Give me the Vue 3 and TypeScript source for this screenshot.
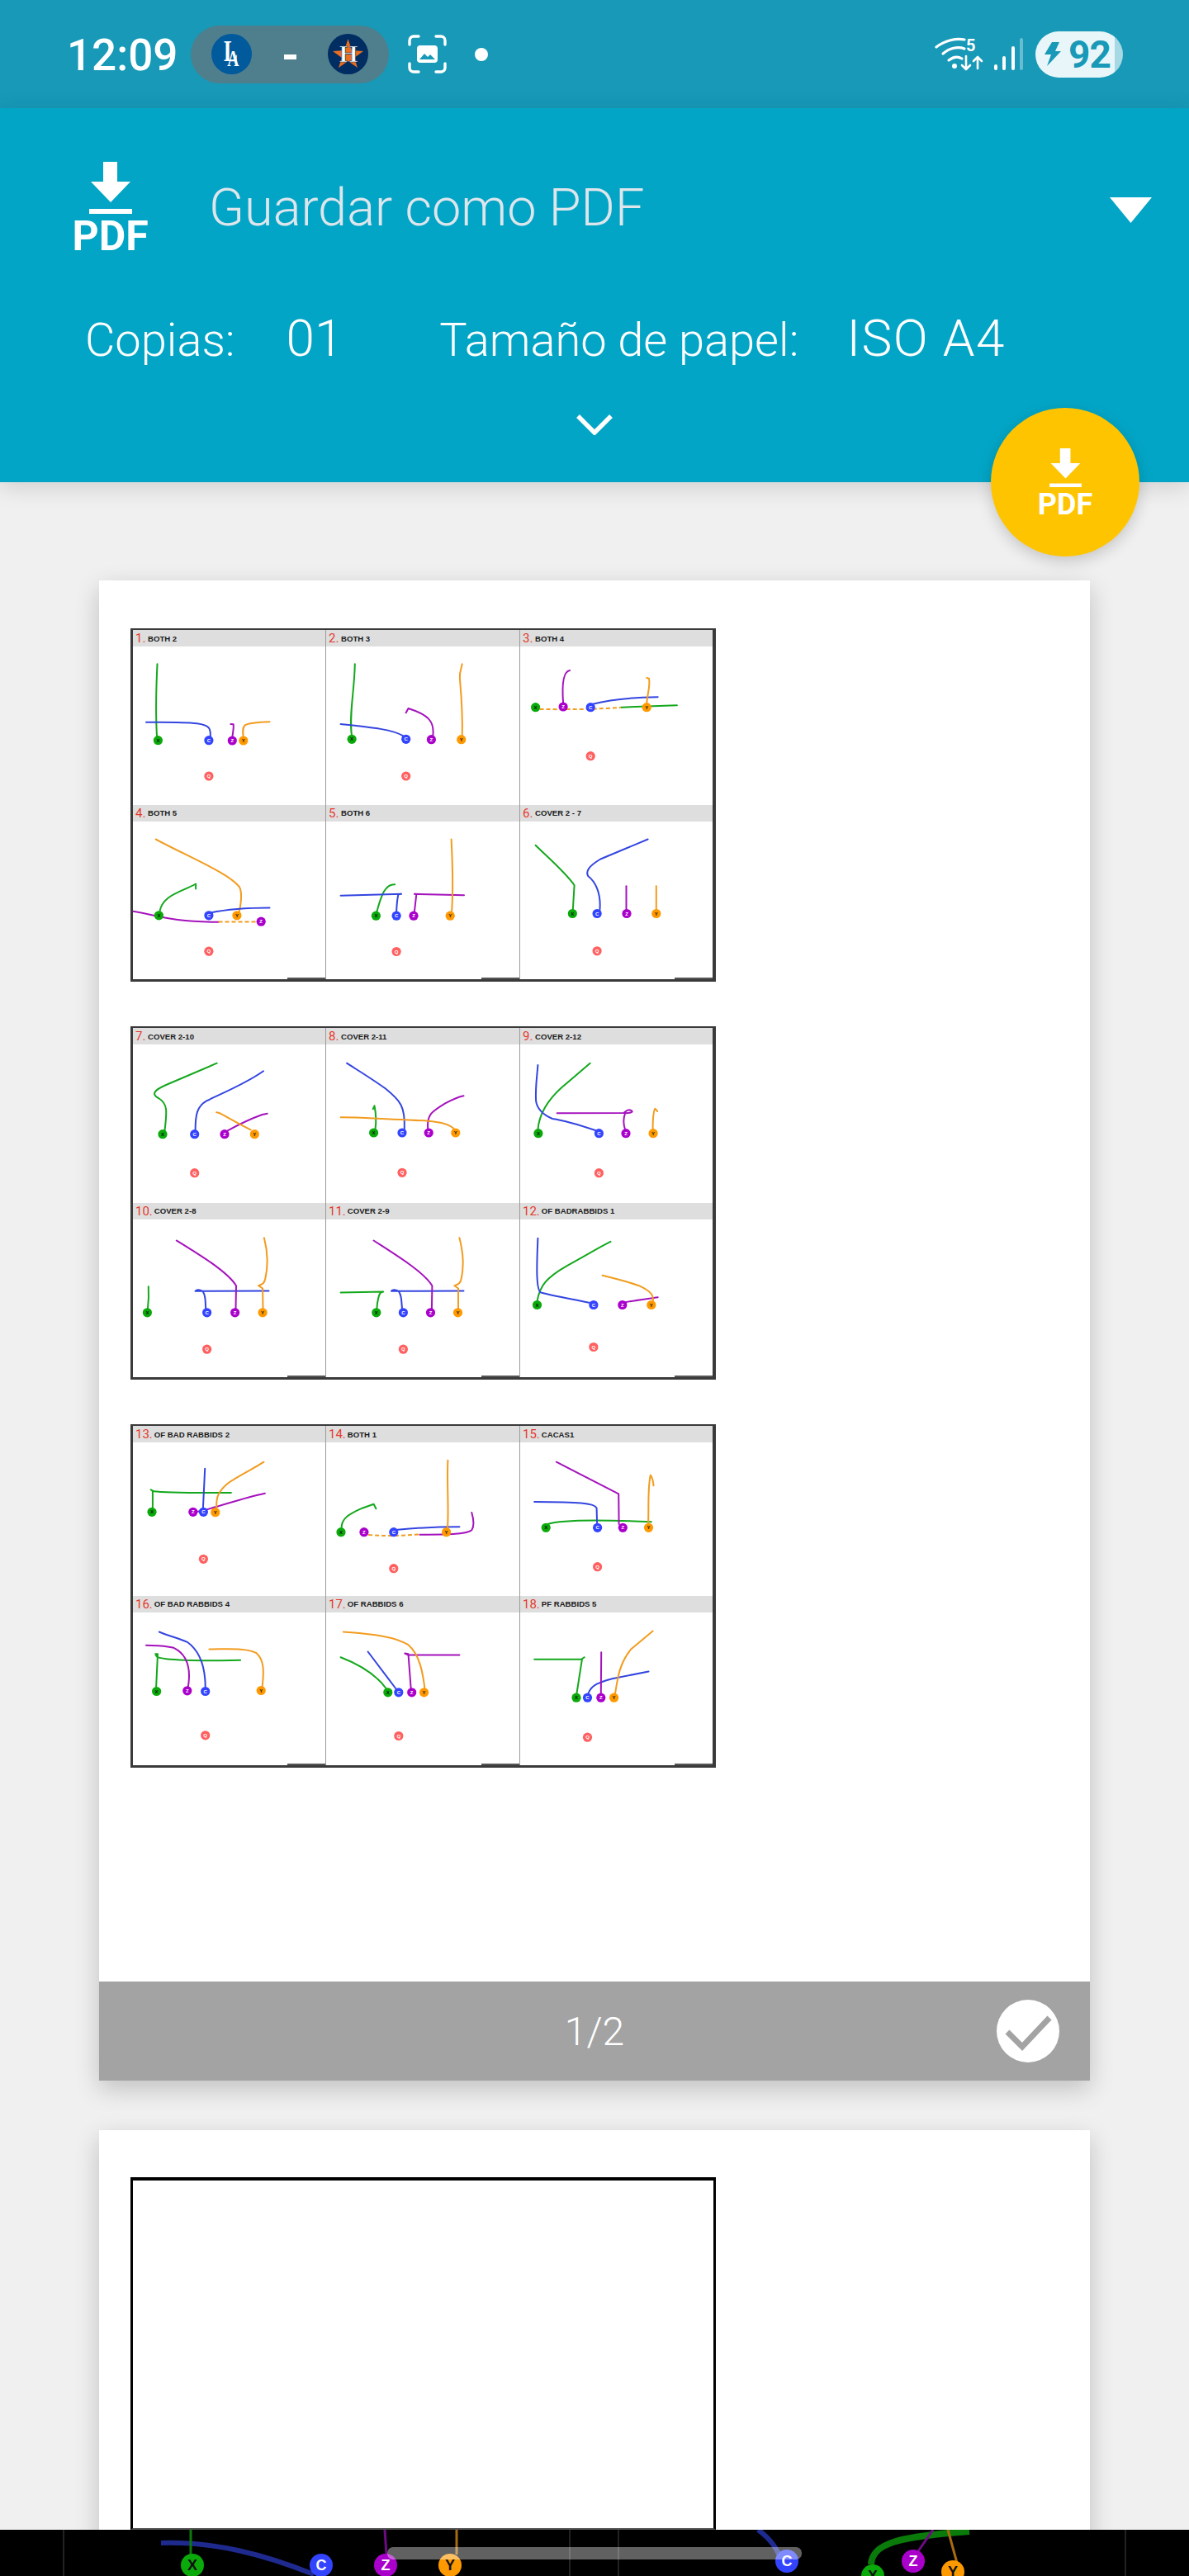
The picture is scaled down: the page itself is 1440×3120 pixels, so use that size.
<script setup lang="ts">
type Player = [string, number, number]
type Route = [string, string]
interface Play { title: string; players: Player[]; routes: Route[] }
interface Sheet { top: number; zoomY: number; height: number; plays: Play[] }

// coordinates were read off 3x crops: x is scaled by 2.148 and y by 3
const XS = 2.148
const COL_LEFT = [23.6, 526.3, 1031]

const raw: Sheet[] = [
  {
    top: 761, zoomY: 750, height: 428,
    plays: [
      { title: 'BOTH 2',
        players: [['X', 89, 440], ['C', 221, 440], ['Z', 282, 441], ['Y', 311, 441], ['Q', 221, 570]],
        routes: [
          ['green', 'M86 430C82 340 84 250 87 163'],
          ['blue', 'M225 428C226 400 225 385 190 379C150 373 100 375 58 374'],
          ['purple', 'M282 430C284 410 286 395 285 382L278 381'],
          ['orange', 'M311 430C309 410 308 395 315 385C325 376 355 374 379 373'],
        ] },
      { title: 'BOTH 3',
        players: [['X', 593, 436], ['C', 734, 436], ['Z', 800, 437], ['Y', 878, 437], ['Q', 734, 570]],
        routes: [
          ['green', 'M593 425C585 350 600 260 601 163'],
          ['blue', 'M728 425C700 400 640 392 564 381'],
          ['purple', 'M804 425C808 380 800 350 740 324L734 340'],
          ['orange', 'M880 425C882 340 878 280 874 215C873 190 878 180 880 163'],
        ] },
      { title: 'BOTH 4',
        players: [['X', 1071, 320], ['Z', 1143, 318], ['C', 1214, 320], ['Y', 1360, 320], ['Q', 1214, 497]],
        routes: [
          ['dash', 'M1082 327C1150 328 1230 328 1295 320'],
          ['green', 'M1295 320L1439 313'],
          ['blue', 'M1220 308C1270 290 1320 284 1389 283'],
          ['purple', 'M1143 305C1140 250 1140 190 1160 186'],
          ['orange', 'M1360 308C1362 270 1370 240 1366 215L1360 213'],
        ] },
      { title: 'BOTH 5',
        players: [['X', 91, 1075], ['C', 221, 1075], ['Y', 294, 1075], ['Z', 357, 1097], ['Q', 221, 1205]],
        routes: [
          ['orange', 'M300 1062C305 1030 308 990 300 970C270 920 180 870 83 798'],
          ['green', 'M93 1062C100 1000 150 990 187 960L187 978'],
          ['blue', 'M225 1065C270 1052 320 1047 379 1047'],
          ['purple', 'M23 1060C90 1075 120 1098 246 1099'],
          ['dash', 'M246 1098L345 1098'],
        ] },
      { title: 'BOTH 6',
        players: [['X', 656, 1076], ['C', 709, 1076], ['Z', 754, 1076], ['Y', 849, 1076], ['Q', 709, 1206]],
        routes: [
          ['green', 'M658 1062C670 1000 680 960 705 962'],
          ['blue', 'M709 1062C710 1030 712 1010 714 998L722 997L564 1003'],
          ['purple', 'M756 1062L761 998L756 997L885 1001'],
          ['orange', 'M853 1062C858 960 855 880 852 798'],
        ] },
      { title: 'COVER 2 - 7',
        players: [['X', 1167, 1068], ['C', 1231, 1068], ['Z', 1308, 1068], ['Y', 1385, 1068], ['Q', 1231, 1204]],
        routes: [
          ['green', 'M1168 1055L1172 965C1150 920 1100 860 1071 820'],
          ['blue', 'M1238 1055C1242 990 1225 950 1208 932C1200 915 1210 895 1240 870L1363 798'],
          ['purple', 'M1307 1055L1307 968'],
          ['orange', 'M1385 1055L1385 968'],
        ] },
    ],
  },
  {
    top: 1243, zoomY: 1240, height: 428,
    plays: [
      { title: 'COVER 2-10',
        players: [['X', 101, 401], ['C', 184, 401], ['Z', 262, 401], ['Y', 340, 401], ['Q', 184, 542]],
        routes: [
          ['green', 'M106 390C112 320 115 290 90 270C70 255 80 240 110 222L242 143'],
          ['blue', 'M186 388C186 330 190 300 215 280C260 250 320 215 363 172'],
          ['purple', 'M270 388C300 365 340 340 360 330L373 326'],
          ['orange', 'M330 385C300 365 270 340 250 325L241 322'],
        ] },
      { title: 'COVER 2-11',
        players: [['X', 650, 396], ['C', 724, 396], ['Z', 793, 396], ['Y', 863, 396], ['Q', 724, 541]],
        routes: [
          ['green', 'M654 382C658 350 655 320 652 298L648 310'],
          ['blue', 'M730 382C732 300 720 280 680 235C640 195 610 170 580 143'],
          ['purple', 'M791 382C788 330 800 320 835 290C855 275 870 265 884 262'],
          ['orange', 'M858 380C840 355 800 352 700 347C650 344 610 340 564 340'],
        ] },
      { title: 'COVER 2-12',
        players: [['X', 1078, 398], ['C', 1236, 398], ['Z', 1306, 398], ['Y', 1377, 398], ['Q', 1236, 542]],
        routes: [
          ['green', 'M1077 385C1080 330 1100 280 1140 230C1170 195 1190 170 1213 143'],
          ['blue', 'M1228 388C1190 370 1140 350 1115 345C1090 330 1075 310 1072 280C1070 230 1075 190 1077 150'],
          ['purple', 'M1304 385C1298 360 1300 340 1304 325C1320 325 1330 318 1315 313C1305 314 1305 322 1300 324L1127 325'],
          ['orange', 'M1376 385C1376 350 1376 320 1382 308L1388 318'],
        ] },
      { title: 'COVER 2-8',
        players: [['X', 61, 1048], ['C', 216, 1048], ['Z', 289, 1048], ['Y', 361, 1048], ['Q', 216, 1181]],
        routes: [
          ['green', 'M62 1035C65 1000 65 980 64 953'],
          ['blue', 'M213 1035C212 1000 212 985 205 970C195 962 188 965 186 970L377 969'],
          ['purple', 'M291 1035L292 950C270 900 200 840 137 786'],
          ['orange', 'M362 1035L361 960L350 950C358 945 365 945 368 925C375 880 375 830 365 776'],
        ] },
      { title: 'COVER 2-9',
        players: [['X', 657, 1048], ['C', 727, 1048], ['Z', 798, 1048], ['Y', 869, 1048], ['Q', 727, 1181]],
        routes: [
          ['green', 'M658 1035C660 1000 662 985 668 975L675 972L564 975'],
          ['blue', 'M724 1035C722 1000 722 985 715 970C705 962 697 965 696 970L884 969'],
          ['purple', 'M801 1035L802 950C780 900 710 840 650 786'],
          ['orange', 'M870 1035L870 960L860 950C868 945 875 945 878 925C885 880 883 830 873 776'],
        ] },
      { title: 'OF BADRABBIDS 1',
        players: [['X', 1075, 1020], ['C', 1222, 1020], ['Z', 1297, 1020], ['Y', 1372, 1020], ['Q', 1222, 1173]],
        routes: [
          ['green', 'M1075 1007C1082 950 1100 920 1150 880C1190 850 1230 815 1266 790'],
          ['blue', 'M1210 1012C1170 1000 1120 988 1085 975C1070 965 1075 850 1077 778'],
          ['purple', 'M1305 1010C1330 1003 1360 998 1389 992'],
          ['orange', 'M1376 1007C1380 985 1370 970 1340 950C1310 935 1280 925 1245 913'],
        ] },
    ],
  },
  {
    top: 1725, zoomY: 1720, height: 416,
    plays: [
      { title: 'OF BAD RABBIDS 2',
        players: [['X', 73, 334], ['Z', 180, 334], ['C', 207, 334], ['Y', 238, 335], ['Q', 207, 505]],
        routes: [
          ['green', 'M75 320L75 256L70 253L75 258C110 265 200 265 279 264'],
          ['blue', 'M206 320L211 176'],
          ['purple', 'M190 333C240 320 300 285 367 266'],
          ['orange', 'M241 320C240 280 245 260 270 230C300 200 340 175 364 152'],
        ] },
      { title: 'BOTH 1',
        players: [['X', 565, 407], ['Z', 625, 407], ['C', 702, 407], ['Y', 839, 407], ['Q', 702, 539]],
        routes: [
          ['green', 'M566 394C566 360 580 345 620 320L650 305L656 322'],
          ['dash', 'M636 417C680 422 720 420 770 415'],
          ['purple', 'M770 416C820 416 890 418 905 400C912 385 910 360 905 336'],
          ['blue', 'M712 398C760 392 820 388 873 388'],
          ['orange', 'M842 394C846 320 840 230 843 146'],
        ] },
      { title: 'CACAS1',
        players: [['X', 1098, 391], ['C', 1232, 391], ['Z', 1298, 391], ['Y', 1365, 391], ['Q', 1232, 533]],
        routes: [
          ['green', 'M1102 378C1140 360 1250 362 1372 370'],
          ['blue', 'M1231 378L1230 320C1225 300 1180 298 1068 297'],
          ['purple', 'M1288 378L1287 268L1125 152'],
          ['orange', 'M1364 378C1366 320 1362 250 1370 200C1376 210 1377 225 1378 238'],
        ] },
      { title: 'OF BAD RABBIDS 4',
        players: [['X', 85, 984], ['Z', 165, 982], ['C', 212, 984], ['Y', 357, 981], ['Q', 212, 1144]],
        routes: [
          ['green', 'M84 970L88 848L82 848C85 860 85 862 110 866C170 875 240 872 303 871'],
          ['blue', 'M212 970C212 900 200 840 165 805C140 790 115 782 92 768'],
          ['purple', 'M167 968C175 900 165 850 130 826C100 816 80 818 58 817'],
          ['orange', 'M360 968C365 910 365 870 345 845C320 825 270 831 222 831'],
        ] },
      { title: 'OF RABBIDS 6',
        players: [['X', 687, 988], ['C', 715, 988], ['Z', 749, 988], ['Y', 781, 988], ['Q', 715, 1146]],
        routes: [
          ['green', 'M683 975C660 930 620 890 564 860'],
          ['blue', 'M708 975L635 840'],
          ['purple', 'M747 975L740 848L731 846L740 852L873 852'],
          ['orange', 'M783 975C778 920 770 850 740 815C700 780 630 775 571 768'],
        ] },
      { title: 'PF RABBIDS 5',
        players: [['X', 1177, 1007], ['C', 1206, 1007], ['Z', 1241, 1007], ['Y', 1275, 1007], ['Q', 1206, 1151]],
        routes: [
          ['green', 'M1178 993L1192 866L1198 860L1190 868L1068 868'],
          ['blue', 'M1208 993C1215 960 1240 950 1270 938L1365 912'],
          ['purple', 'M1241 993L1242 842'],
          ['orange', 'M1278 993C1285 930 1290 880 1320 830L1376 765'],
        ] },
    ],
  },
]

function mapPath(d: string, ox: number, oy: number) {
  let i = 0
  return d.replace(/\d+(\.\d+)?/g, (n) => {
    const v = i++ % 2 === 0 ? (+n - ox) / XS : (+n - oy) / 3
    return v.toFixed(1)
  })
}

let count = 0
const sheets = raw.map((s) => {
  const cellH = (s.height - 5) / 2
  return {
    height: s.height,
    plays: s.plays.map((p, i) => {
      const ox = COL_LEFT[i % 3]
      const bodyTop = s.top + 2 + 20 + (i > 2 ? cellH : 0)
      const oy = (bodyTop - s.zoomY) * 3
      count++
      return {
        num: count,
        title: p.title,
        players: p.players.map(([name, x, y]) => ({
          name,
          x: +((x - ox) / XS).toFixed(1),
          y: +((y - oy) / 3).toFixed(1),
        })),
        routes: p.routes.map(([kind, d]) => ({ kind, d: mapPath(d, ox, oy) })),
      }
    }),
  }
})

const stripRoutes = [
  { cls: 'dim-blue wide', d: 'M195 16C260 14 320 30 380 54' },
  { cls: 'dim-green', d: 'M231 0V30' },
  { cls: 'dim-purple', d: 'M466 0L468 30' },
  { cls: 'dim-orange', d: 'M553 0V30' },
  { cls: 'dim-blue wide', d: 'M918 0C932 10 942 22 947 40' },
  { cls: 'dim-green thick', d: 'M1055 42C1056 16 1090 8 1174 2' },
  { cls: 'dim-purple', d: 'M1130 0L1112 26' },
  { cls: 'dim-orange', d: 'M1148 0L1159 40' },
]
const stripNodes = [
  { name: 'X', cls: 'p-x', x: 233, y: 43 },
  { name: 'C', cls: 'p-c', x: 389, y: 43 },
  { name: 'Z', cls: 'p-z', x: 467, y: 43 },
  { name: 'Y', cls: 'p-y', x: 545, y: 43 },
  { name: 'C', cls: 'p-c', x: 953, y: 38 },
  { name: 'X', cls: 'p-x', x: 1057, y: 56 },
  { name: 'Z', cls: 'p-z', x: 1106, y: 38 },
  { name: 'Y', cls: 'p-y', x: 1154, y: 51 },
]
</script>

<template>
  <div class="screen">
    <div class="status">
      <span class="time">12:09</span>
      <div class="score">
        <svg class="team" viewBox="0 0 49 49">
          <circle cx="24.5" cy="24.5" r="24.5" fill="#005a9c" />
          <text class="la" transform="translate(15 33) scale(0.7 1)">L<tspan class="la-a" dx="-18" dy="6">A</tspan></text>
        </svg>
        <span class="dash"></span>
        <svg class="team" viewBox="0 0 49 49">
          <circle cx="24.5" cy="24.5" r="24.5" fill="#002d62" />
          <polygon fill="#eb6e1f" points="24.5,6 29,20 43,21 32,29 36,41 24.5,33 13,41 17,29 6,21 20,20" />
          <text class="hou" x="25" y="34">H</text>
        </svg>
      </div>
      <svg class="shot" viewBox="0 0 47 47">
        <path d="M2 12V7a5 5 0 0 1 5-5h6M34 2h6a5 5 0 0 1 5 5v5M45 35v5a5 5 0 0 1-5 5h-6M13 45H7a5 5 0 0 1-5-5v-5" fill="none" stroke="#fff" stroke-width="3.4" stroke-linecap="round" />
        <rect x="11" y="13" width="25" height="21" rx="4" fill="#fff" />
        <path d="M14 30l6-7 4 4 3-3 6 6z" fill="#1799b7" />
      </svg>
      <span class="dot"></span>

      <div class="sys">
        <svg class="wifi" viewBox="0 0 62 44">
          <g fill="none" stroke="#fff" stroke-width="3.2" stroke-linecap="round">
            <path d="M2 13C12 5 26 2 36 4" />
            <path d="M10 21C18 14 28 12 36 15" />
            <path d="M17 29C22 25 28 24 33 27" />
          </g>
          <circle cx="24" cy="36" r="3" fill="#fff" />
          <text class="five" x="38" y="18">5</text>
          <g fill="none" stroke="#fff" stroke-width="2.6" stroke-linecap="round" stroke-linejoin="round">
            <path d="M38 24V40M33 35l5 5 5-5" />
            <path d="M52 39V25M47 30l5-5 5 5" />
          </g>
        </svg>
        <div class="bars">
          <i class="b1"></i><i class="b2"></i><i class="b3"></i><i class="b4"></i>
        </div>
        <div class="battery">
          <svg class="bolt" viewBox="0 0 20 29">
            <path d="M9 0h9l-5 11h7L3 29l5-14H0z" fill="#1799b7" />
          </svg>
          <span>92</span>
        </div>
      </div>
    </div>

    <header class="bar">
      <div class="row-dest">
        <div class="pdf-icon">
          <svg class="pdf-arrow" viewBox="0 0 52 63">
            <path d="M17 0h17v24h16L26 49 2 24h15z" fill="#fff" />
            <rect y="57" width="52" height="6" fill="#fff" />
          </svg>
          <span>PDF</span>
        </div>
        <span class="dest">Guardar como PDF</span>
        <svg class="caret" viewBox="0 0 51 31"><polygon points="0,0 51,0 25.5,31" fill="#fff" /></svg>
      </div>
      <div class="row-opts">
        <span class="copies-label">Copias:</span>
        <span class="copies">01</span>
        <span class="paper-label">Tamaño de papel:</span>
        <span class="paper">ISO A4</span>
      </div>
      <svg class="chevron" viewBox="0 0 44 26">
        <path d="M2 3l20 20L42 3" fill="none" stroke="#fff" stroke-width="5.5" />
      </svg>
    </header>

    <div class="fab">
      <svg class="fab-arrow" viewBox="0 0 52 63">
        <path d="M17 0h17v24h16L26 49 2 24h15z" fill="#fff" />
        <rect y="57" width="52" height="6" fill="#fff" />
      </svg>
      <span>PDF</span>
    </div>

    <main class="pages">
      <section class="page">
        <div class="preview">
          <div v-for="(sheet, si) in sheets" :key="si" class="sheet" :style="{ height: sheet.height + 'px' }">
            <div v-for="play in sheet.plays" :key="play.num" class="cell">
              <div class="cell-head">
                <span class="num">{{ play.num }}.</span>
                <span class="name">{{ play.title }}</span>
              </div>
              <svg class="field">
                <path v-for="(r, ri) in play.routes" :key="ri" :d="r.d" :class="['route', r.kind]" />
                <g v-for="pl in play.players" :key="pl.name">
                  <circle :cx="pl.x" :cy="pl.y" r="5.6" :class="'p-' + pl.name.toLowerCase()" />
                  <text :x="pl.x" :y="pl.y + 2" :class="['tag', 't-' + pl.name.toLowerCase()]">{{ pl.name }}</text>
                </g>
              </svg>
            </div>
          </div>
        </div>
        <div class="page-foot">
          <span class="page-num">1/2</span>
          <svg class="check" viewBox="0 0 76 76">
            <circle cx="38" cy="38" r="38" fill="#fff" />
            <path d="M13 39l18 18 33-35" fill="none" stroke="#a3a3a3" stroke-width="7" />
          </svg>
        </div>
      </section>

      <section class="page second">
        <div class="blank-sheet"></div>
      </section>
    </main>

    <div class="strip">
      <svg class="strip-art" viewBox="0 0 1440 56">
        <path d="M77 0V56M690 0V56M749 0V56M1363 0V56" stroke="#222" stroke-width="2" fill="none" />
        <path v-for="(r, i) in stripRoutes" :key="i" :d="r.d" :class="['strip-route', r.cls]" />
        <g v-for="(n, i) in stripNodes" :key="i">
          <circle :cx="n.x" :cy="n.y" r="14" :class="n.cls" />
          <text :x="n.x" :y="n.y + 6" :class="['strip-tag', 't-' + n.name.toLowerCase()]">{{ n.name }}</text>
        </g>
      </svg>
      <div class="scrollbar"></div>
    </div>
  </div>
</template>

<style>
html, body { margin: 0; background: #f0f0f0; }
</style>

<style scoped>
.screen {
  position: relative; width: 1440px; height: 3120px; overflow: hidden;
  background: #f0f0f0; font-family: Roboto, "Liberation Sans", sans-serif;
  display: flex; flex-direction: column;
}

/* status bar */
.status {
  height: 131px; background: #1799b7; color: #fff; flex: none;
  display: flex; align-items: center; padding-left: 81px; box-sizing: border-box;
}
.time { font-size: 53px; font-weight: 500; width: 150px; margin-top: 3px; }
.score {
  width: 240px; height: 70px; border-radius: 35px; background: #4f7f8d;
  display: flex; align-items: center; justify-content: space-between;
  padding: 0 25px; box-sizing: border-box;
}
.team { width: 49px; height: 49px; }
.dash { width: 15px; height: 6px; background: #fff; margin-top: 6px; }
.la, .hou { font-family: "Liberation Serif", serif; font-weight: 700; fill: #fff; }
.la { font-size: 36px; }
.la-a { font-size: 28px; }
.hou { font-size: 29px; text-anchor: middle; stroke: #002d62; stroke-width: 0.6; }
.shot { width: 47px; height: 47px; margin-left: 23px; }
.dot { width: 16px; height: 16px; border-radius: 50%; background: #fff; margin-left: 34px; }

.sys { margin-left: auto; padding-right: 80px; display: flex; align-items: center; }
.wifi { width: 62px; height: 44px; }
.five { font-size: 20px; font-weight: 700; fill: #fff; }
.bars { display: flex; align-items: flex-end; gap: 6.5px; height: 39px; margin-left: 10px; }
.bars i { width: 4px; background: #fff; border-radius: 2px; display: block; }
.bars .b1 { height: 7px; }
.bars .b2 { height: 17px; }
.bars .b3 { height: 29px; }
.bars .b4 { height: 39px; opacity: 0.35; }
.battery {
  width: 106px; height: 56px; border-radius: 28px; margin-left: 15px;
  background: linear-gradient(90deg, #e8f6f9 91%, #a6d9e4 91%);
  display: flex; align-items: center; box-sizing: border-box; padding-left: 11px;
  color: #1799b7; font-size: 46px; font-weight: 700;
}
.bolt { width: 20px; height: 29px; }
.battery span { margin-left: 9px; letter-spacing: -1px; line-height: 1; }

/* print destination bar */
.bar {
  height: 453px; background: #03a5c6; color: #fff; flex: none; box-sizing: border-box;
  padding-top: 65px; position: relative; z-index: 2;
  box-shadow: 0 6px 26px rgba(0, 0, 0, 0.14);
  display: flex; flex-direction: column;
}
.row-dest { display: flex; align-items: center; height: 107px; padding: 0 45px 0 88px; }
.pdf-icon { width: 91px; display: flex; flex-direction: column; align-items: center; flex: none; align-self: flex-start; }
.pdf-arrow { width: 52px; height: 63px; display: block; }
.pdf-icon span { font-size: 50px; font-weight: 700; line-height: 44px; margin-top: 5px; }
.dest { margin-left: 74px; font-size: 63px; font-weight: 300; color: #dee6ec; margin-top: 4px; }
.caret { width: 51px; height: 31px; margin-left: auto; margin-top: 9px; }
.row-opts {
  display: flex; align-items: baseline; height: 74px; line-height: 74px;
  margin-top: 70px; padding-left: 103px; font-size: 56px; font-weight: 300;
}
.copies { margin-left: 62px; font-size: 62px; }
.paper-label { margin-left: 117px; }
.paper { margin-left: 58px; font-size: 62px; letter-spacing: 1.5px; }
.chevron { width: 44px; height: 26px; margin: 54px auto 0; display: block; }

.fab {
  position: absolute; left: 1200px; top: 494px; width: 180px; height: 180px; border-radius: 50%;
  background: #ffc400; color: #fff; z-index: 3; box-shadow: 0 6px 18px rgba(0, 0, 0, 0.18);
  display: flex; flex-direction: column; align-items: center; padding-top: 49px; box-sizing: border-box;
}
.fab-arrow { width: 39px; height: 47px; display: block; }
.fab span { font-size: 36px; font-weight: 700; line-height: 34px; margin-top: 4px; }

/* pages */
.pages { padding: 119px 120px 0; display: flex; flex-direction: column; gap: 60px; }
.page { background: #fff; box-shadow: 0 10px 28px rgba(0, 0, 0, 0.2); flex: none; }
.preview {
  height: 1697px; box-sizing: border-box; padding: 58px 0 0 38px;
  display: flex; flex-direction: column; gap: 54px;
}
.sheet {
  width: 709px; box-sizing: border-box; display: grid;
  grid-template-columns: 234px 235px 1fr; grid-template-rows: 1fr 1fr;
  border: 3px solid #3a3a3a; border-top-width: 2px; border-right-width: 4px;
}
.cell {
  position: relative; display: flex; flex-direction: column; min-height: 0;
  border-right: 1px solid #9a9a9a; box-sizing: border-box;
}
.cell:nth-child(3n) { border-right: 0; }
.cell:nth-child(n + 4)::after {
  content: ""; position: absolute; right: 0; bottom: 0; width: 46px; height: 2px; background: #555;
}
.cell-head {
  height: 20px; flex: none; background: #dedede; display: flex; align-items: center;
  padding-left: 3px; white-space: nowrap; overflow: hidden;
}
.num { font-size: 15px; color: #e5392d; min-width: 13px; margin-right: 2px; flex: none; }
.name {
  font-family: "Liberation Sans", sans-serif; font-size: 9.6px; font-weight: 700; color: #1a1a1a;
}
.field { flex: 1; width: 100%; min-height: 0; display: block; background: #fff; }
.route { fill: none; stroke-width: 2; stroke-linecap: round; stroke-linejoin: round; }
.route.green { stroke: #13a81c; }
.route.blue { stroke: #3345e0; }
.route.purple { stroke: #a512bd; }
.route.orange { stroke: #f29c1f; }
.route.dash { stroke: #f29c1f; stroke-dasharray: 5 3; stroke-linecap: butt; }
.p-x { fill: #0aaa0a; }
.p-c { fill: #3344ff; }
.p-z { fill: #aa00cc; }
.p-y { fill: #ff9900; }
.p-q { fill: #ff6060; }
.tag {
  font-family: "Liberation Sans", sans-serif; font-size: 6px; font-weight: 700; text-anchor: middle;
}
.t-x, .t-y { fill: #111; }
.t-c, .t-z, .t-q { fill: #fff; }

.page-foot {
  height: 120px; background: #a3a3a3; position: relative; display: flex;
  align-items: center; justify-content: center;
}
.page-num { color: #fff; font-size: 48px; font-weight: 300; margin-left: 0; }
.check { position: absolute; right: 37px; top: 22px; width: 76px; height: 76px; }

.second { height: 700px; padding: 57px 0 0 38px; box-sizing: content-box; }
.blank-sheet {
  width: 709px; height: 427px; box-sizing: border-box; background: #fff;
  border: 3px solid #000; border-top-width: 4px; border-bottom: 2px solid #555;
}

/* bottom overlay */
.strip {
  position: absolute; left: 0; right: 0; bottom: 0; height: 56px; background: #000; overflow: hidden; z-index: 4;
}
.strip-art { width: 1440px; height: 56px; display: block; }
.strip-route { fill: none; stroke-width: 3; }
.strip-route.wide { stroke-width: 6; }
.strip-route.thick { stroke-width: 8; }
.dim-blue { stroke: #1f2a8f; }
.dim-green { stroke: #0a7a0a; }
.dim-purple { stroke: #6f0a85; }
.dim-orange { stroke: #a86a10; }
.strip-tag {
  font-family: "Liberation Sans", sans-serif; font-size: 18px; font-weight: 700; text-anchor: middle;
}
.scrollbar {
  position: absolute; left: 469px; top: 21px; width: 502px; height: 15px; border-radius: 7px;
  background: rgba(255, 255, 255, 0.38);
}
</style>
